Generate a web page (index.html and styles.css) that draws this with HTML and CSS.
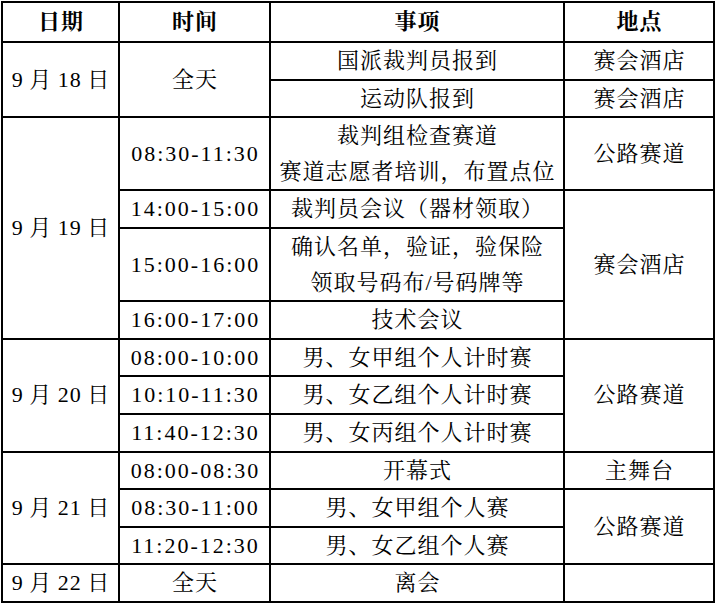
FILE: index.html
```html
<!DOCTYPE html>
<html lang="zh-CN">
<head>
<meta charset="utf-8">
<title>赛程安排</title>
<link rel="stylesheet" href="styles.css">
</head>
<body>
<table class="schedule">
  <colgroup>
    <col class="c-date">
    <col class="c-time">
    <col class="c-item">
    <col class="c-place">
  </colgroup>
  <thead>
    <tr class="head">
      <th>日期</th>
      <th>时间</th>
      <th>事项</th>
      <th>地点</th>
    </tr>
  </thead>
  <tbody>
    <tr>
      <td class="date" rowspan="2">9 月 18 日</td>
      <td rowspan="2">全天</td>
      <td>国派裁判员报到</td>
      <td>赛会酒店</td>
    </tr>
    <tr>
      <td>运动队报到</td>
      <td>赛会酒店</td>
    </tr>

    <tr>
      <td class="date" rowspan="4">9 月 19 日</td>
      <td class="time">08:30-11:30</td>
      <td>裁判组检查赛道<br>赛道志愿者培训，布置点位</td>
      <td>公路赛道</td>
    </tr>
    <tr>
      <td class="time">14:00-15:00</td>
      <td>裁判员会议（器材领取）</td>
      <td rowspan="3">赛会酒店</td>
    </tr>
    <tr>
      <td class="time">15:00-16:00</td>
      <td>确认名单，验证，验保险<br>领取号码布/号码牌等</td>
    </tr>
    <tr>
      <td class="time">16:00-17:00</td>
      <td>技术会议</td>
    </tr>

    <tr>
      <td class="date" rowspan="3">9 月 20 日</td>
      <td class="time">08:00-10:00</td>
      <td>男、女甲组个人计时赛</td>
      <td rowspan="3">公路赛道</td>
    </tr>
    <tr>
      <td class="time">10:10-11:30</td>
      <td>男、女乙组个人计时赛</td>
    </tr>
    <tr>
      <td class="time">11:40-12:30</td>
      <td>男、女丙组个人计时赛</td>
    </tr>

    <tr>
      <td class="date" rowspan="3">9 月 21 日</td>
      <td class="time">08:00-08:30</td>
      <td>开幕式</td>
      <td>主舞台</td>
    </tr>
    <tr>
      <td class="time">08:30-11:00</td>
      <td>男、女甲组个人赛</td>
      <td rowspan="2">公路赛道</td>
    </tr>
    <tr>
      <td class="time">11:20-12:30</td>
      <td>男、女乙组个人赛</td>
    </tr>

    <tr>
      <td class="date">9 月 22 日</td>
      <td>全天</td>
      <td>离会</td>
      <td></td>
    </tr>
  </tbody>
</table>
</body>
</html>
```

FILE: styles.css
```css
html, body {
  margin: 0;
  padding: 0;
  background: #ffffff;
}

body {
  padding: 1px 0 0 1px;
  font-family: "Liberation Serif", "Noto Serif CJK SC", "Noto Sans CJK SC", serif;
  color: #000000;
}

.schedule {
  border-collapse: collapse;
  table-layout: fixed;
  width: 712px;
}

.c-date { width: 117px; }
.c-time { width: 151px; }
.c-item { width: 294px; }
.c-place { width: 150px; }

.schedule th,
.schedule td {
  border: 2px solid #000000;
  padding: 0 0 0 1px;
  text-align: center;
  vertical-align: middle;
  font-size: 22px;
  letter-spacing: 1px;
  line-height: 35.6px;
  font-weight: normal;
}

.schedule th {
  font-weight: bold;
  line-height: 38px;
}

.schedule td.time {
  letter-spacing: 2px;
  padding-left: 2px;
}

.schedule td.date {
  word-spacing: -1px;
}
```
